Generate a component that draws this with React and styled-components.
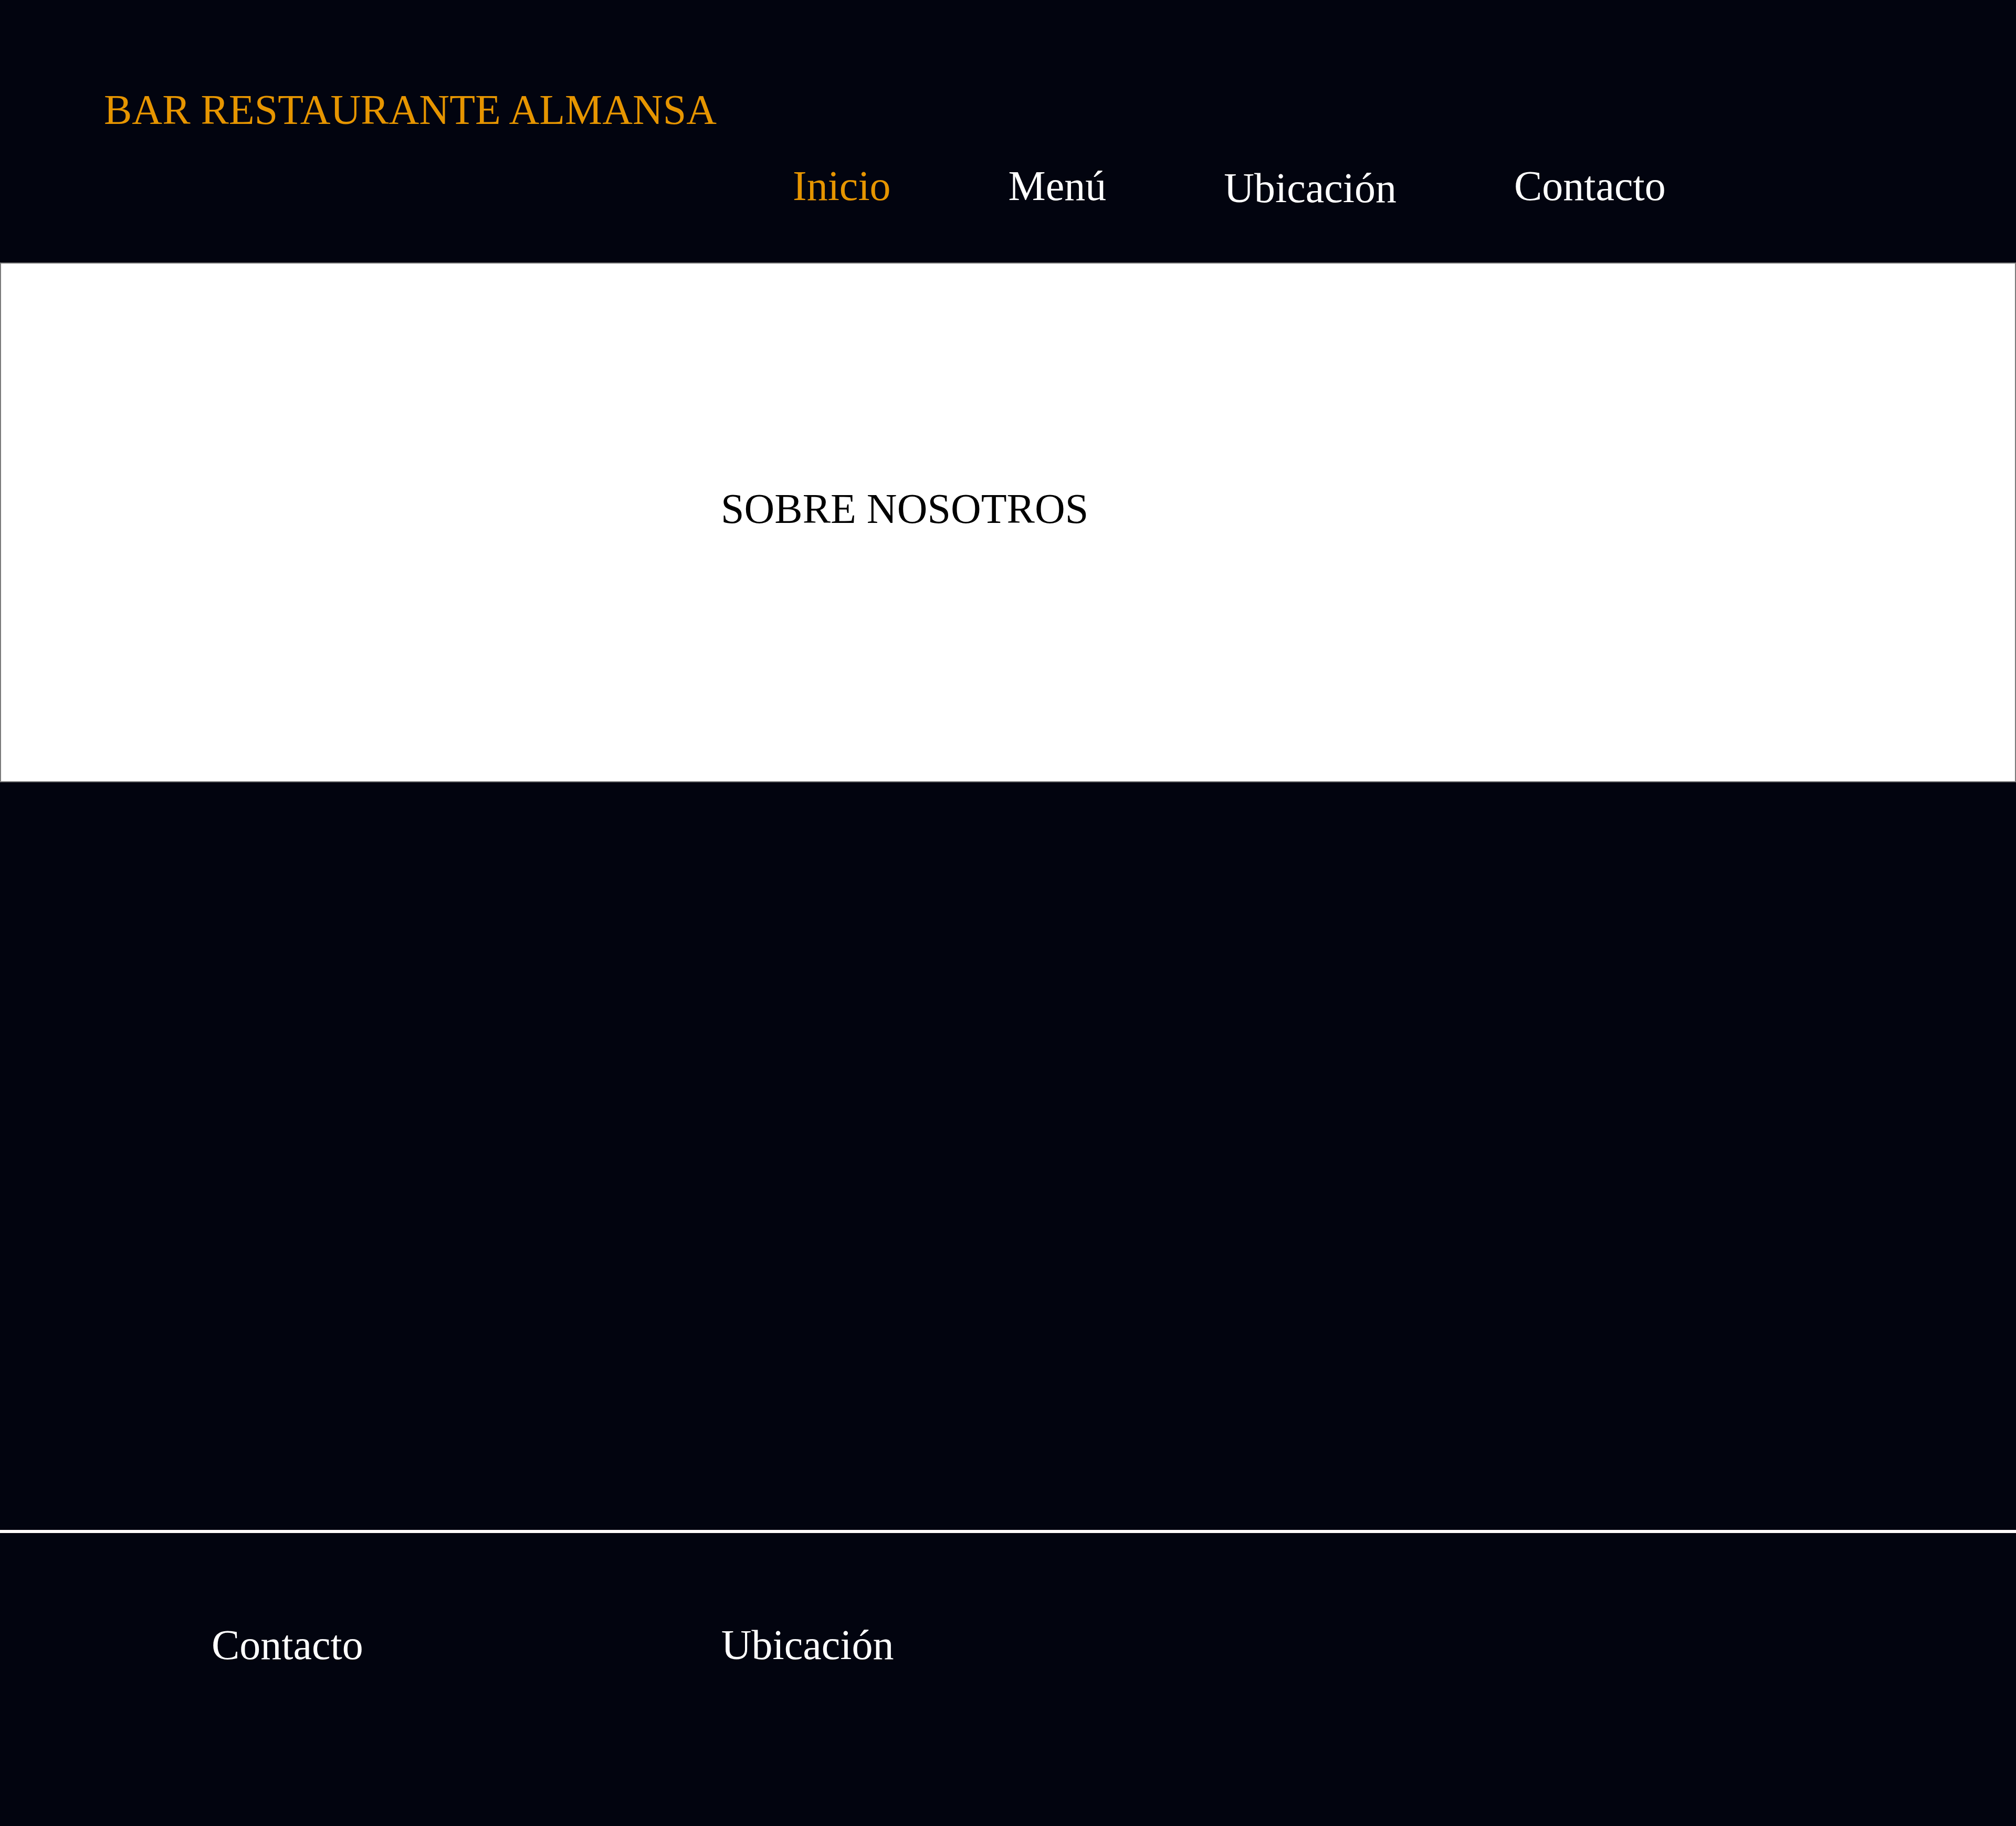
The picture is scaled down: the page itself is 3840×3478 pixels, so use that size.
import React from 'react'
import styled, { createGlobalStyle } from 'styled-components'

const GlobalStyle = createGlobalStyle`
  html, body {
    margin: 0;
    padding: 0;
    background-color: #02040f;
  }
  body {
    font-family: 'Liberation Serif', 'Times New Roman', serif;
    min-height: 3478px;
  }
`

const Page = styled.div`
  display: flex;
  flex-direction: column;
  min-height: 3478px;
  background-color: #02040f;
`

const Header = styled.header`
  display: flex;
  flex-direction: column;
  height: 500px;
  box-sizing: border-box;
  padding: 164px 0 0 198px;
`

const Brand = styled.h1`
  margin: 0;
  font-size: 80px;
  font-weight: 400;
  color: #e69500;
  line-height: normal;
`

const Nav = styled.nav`
  display: flex;
  align-items: flex-start;
  gap: 224px;
  margin: 54px 0 0 1312px;
`

const NavLink = styled.a`
  font-size: 80px;
  line-height: normal;
  text-decoration: none;
  color: ${({ $active }) => ($active ? '#e69500' : '#ffffff')};
  margin-top: ${({ $drop }) => ($drop ? '4px' : '0')};
`

const About = styled.section`
  height: 990px;
  box-sizing: border-box;
  border: 2px solid #7a7a7a;
  background-color: #ffffff;
  padding: 422px 0 0 1371px;
`

const AboutTitle = styled.h2`
  margin: 0;
  font-size: 80px;
  font-weight: 400;
  color: #000000;
  line-height: normal;
`

const Spacer = styled.div`
  height: 1424px;
`

const Footer = styled.footer`
  border-top: 6px solid #fffafa;
  display: flex;
  padding: 168px 0 0 403px;
  height: 558px;
  box-sizing: border-box;
  gap: 682px;
`

const FooterLink = styled.a`
  font-size: 80px;
  line-height: normal;
  color: #ffffff;
  text-decoration: none;
`

const navItems = [
  { label: 'Inicio', active: true },
  { label: 'Menú' },
  { label: 'Ubicación', drop: true },
  { label: 'Contacto' },
]

const App = () => (
  <Page>
    <GlobalStyle />
    <Header>
      <Brand>BAR RESTAURANTE ALMANSA</Brand>
      <Nav>
        {navItems.map((item) => (
          <NavLink key={item.label} href="#" $active={item.active} $drop={item.drop}>
            {item.label}
          </NavLink>
        ))}
      </Nav>
    </Header>
    <About>
      <AboutTitle>SOBRE NOSOTROS</AboutTitle>
    </About>
    <Spacer />
    <Footer>
      <FooterLink href="#">Contacto</FooterLink>
      <FooterLink href="#">Ubicación</FooterLink>
    </Footer>
  </Page>
)

export default App
